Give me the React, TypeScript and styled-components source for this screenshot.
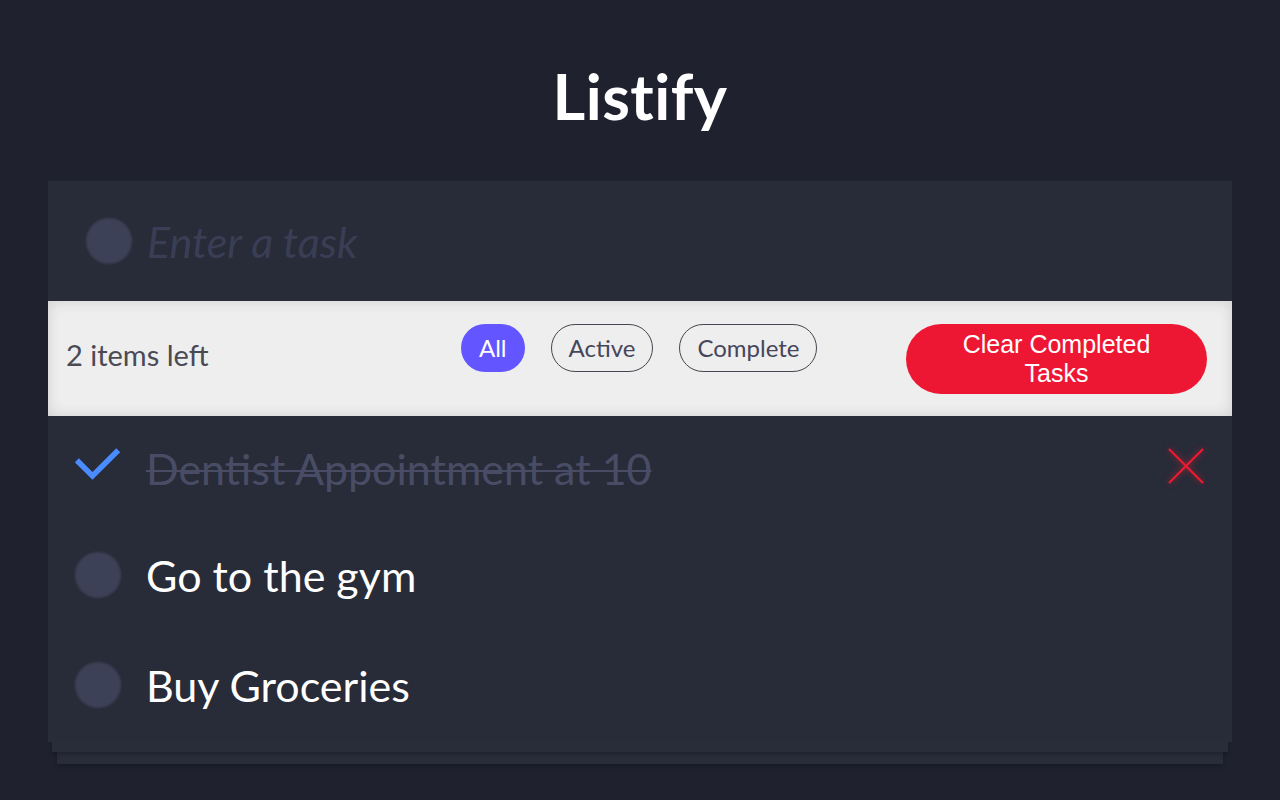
import React from "react";
import styled, { createGlobalStyle } from "styled-components";

const GlobalStyle = createGlobalStyle`
  html, body { margin: 0; padding: 0; background: #1f212e; }
  body { font-family: "Lato", "Noto Sans", sans-serif; }
  * { box-sizing: border-box; }
`;

const Page = styled.div`
  min-height: 800px;
  background: #1f212e;
`;

const Header = styled.header`
  height: 181px;
  display: flex;
  align-items: center;
  justify-content: center;
  padding-top: 10px;
`;

const Title = styled.h1`
  margin: 0;
  color: #ffffff;
  font-family: "Lato", sans-serif;
  font-weight: 700;
  font-size: 63px;
  letter-spacing: 0.5px;
`;

const Stack = styled.div`
  width: 1184px;
  margin: 0 auto;
  display: flex;
  flex-direction: column;
  align-items: center;
`;

const Card = styled.section`
  width: 100%;
  background: #282b38;
  position: relative;
  z-index: 2;
`;

const Layer = styled.div<{ $inset: number; $h: number; $z: number }>`
  width: calc(100% - ${(p) => p.$inset * 2}px);
  height: ${(p) => p.$h}px;
  background: #292c39;
  box-shadow: 0 2px 4px rgba(0, 0, 0, 0.25);
  position: relative;
  z-index: ${(p) => p.$z};
`;

const InputRow = styled.div`
  height: 120px;
  display: flex;
  align-items: center;
  padding-left: 38px;
  gap: 15px;
`;

const Dot = styled.span<{ $size: number }>`
  width: ${(p) => p.$size}px;
  height: ${(p) => p.$size}px;
  border-radius: 50%;
  background: #3d4157;
  filter: blur(1px);
  flex: none;
`;

const TaskInput = styled.input`
  background: transparent;
  border: none;
  outline: none;
  font-family: "Lato", sans-serif;
  font-style: italic;
  font-size: 43px;
  color: #ffffff;
  width: 600px;
  padding: 0;
  &::placeholder {
    color: #3a3e55;
  }
`;

const Footer = styled.div`
  height: 115px;
  background: #eeeeee;
  box-shadow: inset 0 0 14px rgba(0, 0, 0, 0.13);
  display: flex;
  align-items: center;
  padding: 0 25px 0 18px;
`;

const Count = styled.span`
  font-size: 29px;
  color: #4a4a55;
  width: 395px;
  margin-bottom: 8px;
`;

const Filters = styled.div`
  display: flex;
  gap: 26px;
  margin-bottom: 22px;
  flex: 1;
`;

const Pill = styled.button<{ $active?: boolean }>`
  height: 48px;
  padding: 0 ${(p) => (p.$active ? 18 : 17)}px;
  border-radius: 24px;
  font-family: "Lato", sans-serif;
  font-size: 24px;
  cursor: pointer;
  background: ${(p) => (p.$active ? "#6355ff" : "transparent")};
  color: ${(p) => (p.$active ? "#ffffff" : "#46465a")};
  border: ${(p) => (p.$active ? "none" : "1.5px solid #46464f")};
`;

const ClearButton = styled.button`
  width: 301px;
  height: 70px;
  border-radius: 35px;
  border: none;
  background: #ee1733;
  color: #ffffff;
  font-family: "Liberation Sans", Arial, sans-serif;
  font-size: 25px;
  line-height: 29px;
  padding: 0 30px;
  cursor: pointer;
`;

const List = styled.ul`
  list-style: none;
  margin: 0;
  padding: 0 0 2px;
`;

const TaskRow = styled.li<{ $first?: boolean }>`
  height: ${(p) => (p.$first ? 104 : 110)}px;
  display: flex;
  align-items: center;
  padding: 0 27px 0 27px;
  gap: 25px;
`;

const CheckBox = styled.span`
  width: 46px;
  height: 46px;
  flex: none;
  display: flex;
  align-items: center;
  justify-content: center;
`;

const CheckMark = styled.svg`
  margin-bottom: 8px;
`;

const TaskText = styled.span<{ $done?: boolean }>`
  flex: 1;
  font-size: 43px;
  color: ${(p) => (p.$done ? "#484d65" : "#ffffff")};
  text-decoration: ${(p) => (p.$done ? "line-through" : "none")};
  text-decoration-thickness: 2px;
`;

const DeleteButton = styled.button`
  width: 38px;
  height: 38px;
  padding: 0;
  border: none;
  background: transparent;
  cursor: pointer;
  margin-bottom: 4px;
  filter: drop-shadow(0 0 3px rgba(255, 30, 50, 0.6));
`;

const Check = () => (
  <CheckMark width="50" height="36" viewBox="0 0 50 36">
    <polyline
      points="2,14 19,31 47,3"
      fill="none"
      stroke="#4a8cff"
      strokeWidth="6"
      strokeLinecap="butt"
      strokeLinejoin="miter"
    />
  </CheckMark>
);

const Cross = () => (
  <svg width="38" height="38" viewBox="0 0 38 38">
    <path d="M2 2 L36 36 M36 2 L2 36" stroke="#ee1a30" strokeWidth="2.2" />
  </svg>
);

const tasks = [
  { text: "Dentist Appointment at 10", done: true },
  { text: "Go to the gym", done: false },
  { text: "Buy Groceries", done: false },
];

export default function App() {
  return (
    <Page>
      <GlobalStyle />
      <Header>
        <Title>Listify</Title>
      </Header>
      <Stack>
        <Card>
          <InputRow>
            <Dot $size={46} />
            <TaskInput placeholder="Enter a task" />
          </InputRow>
          <Footer>
            <Count>2 items left</Count>
            <Filters>
              <Pill $active>All</Pill>
              <Pill>Active</Pill>
              <Pill>Complete</Pill>
            </Filters>
            <ClearButton>Clear Completed Tasks</ClearButton>
          </Footer>
          <List>
            {tasks.map((t, i) => (
              <TaskRow key={t.text} $first={i === 0}>
                <CheckBox>{t.done ? <Check /> : <Dot $size={46} />}</CheckBox>
                <TaskText $done={t.done}>{t.text}</TaskText>
                {t.done && (
                  <DeleteButton aria-label="delete">
                    <Cross />
                  </DeleteButton>
                )}
              </TaskRow>
            ))}
          </List>
        </Card>
        <Layer $inset={4} $h={10} $z={1} />
        <Layer $inset={9} $h={12} $z={0} />
      </Stack>
    </Page>
  );
}
